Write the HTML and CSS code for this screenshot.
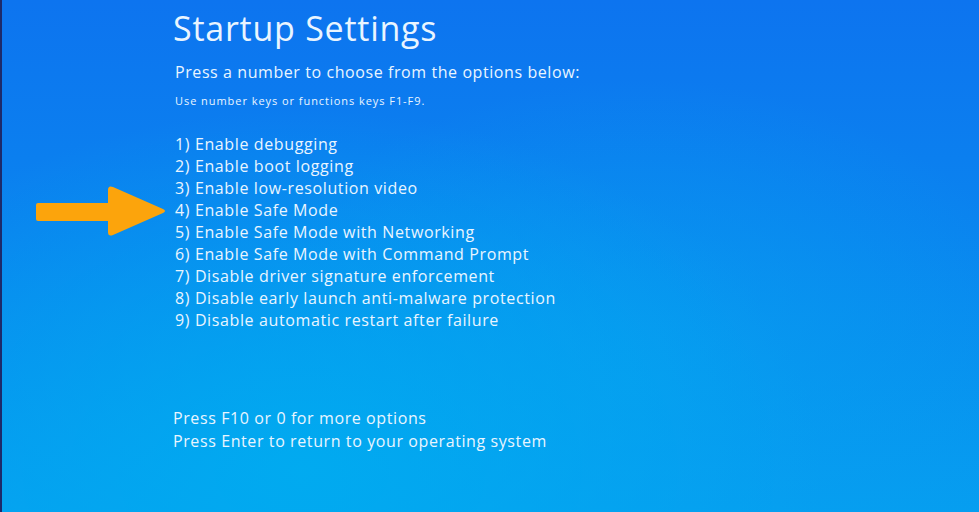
FILE: index.html
```html
<!DOCTYPE html>
<html lang="en">
<head>
    <meta charset="UTF-8">
    <meta name="viewport" content="width=device-width, initial-scale=1.0">
    <title>Startup Settings</title>
    <link rel="stylesheet" href="styles.css">
</head>
<body>

    <div class="screen">
        <!-- pointer to the safe mode option -->
        <svg class="arrow" width="140" height="60" viewBox="0 0 140 60">
            <path d="M3 20 H73 V7 Q73 2 78 4 L128 26 Q132 28 128 30 L78 52 Q73 54 73 49 V38 H3 Q1 38 1 36 V22 Q1 20 3 20 Z" fill="#fca40c"/>
        </svg>

        <div class="panel">
            <h1>Startup Settings</h1>
            <p class="lead">Press a number to choose from the options below:</p>
            <p class="hint">Use number keys or functions keys F1-F9.</p>

            <ul class="options">
                <li>1) Enable debugging</li>
                <li>2) Enable boot logging</li>
                <li>3) Enable low-resolution video</li>
                <li>4) Enable Safe Mode</li>
                <li>5) Enable Safe Mode with Networking</li>
                <li>6) Enable Safe Mode with Command Prompt</li>
                <li>7) Disable driver signature enforcement</li>
                <li>8) Disable early launch anti-malware protection</li>
                <li>9) Disable automatic restart after failure</li>
            </ul>

            <div class="footer">
                <p>Press F10 or 0 for more options</p>
                <p>Press Enter to return to your operating system</p>
            </div>
        </div>
    </div>

</body>
</html>
```

FILE: styles.css
```css
html, body {
    margin: 0;
    height: 100%;
}
body {
    font-family: 'Open Sans', 'Noto Sans', sans-serif;
    color: #e9f5ff;
    overflow: hidden;
}
.screen {
    position: relative;
    height: 512px;
    border-left: 2px solid #1d2a6a;
    background:
        radial-gradient(ellipse 520px 360px at 300px 470px, rgba(0, 172, 240, 0.9), rgba(0, 172, 240, 0) 100%),
        radial-gradient(ellipse 420px 300px at 640px 380px, rgba(6, 160, 240, 0.7), rgba(6, 160, 240, 0) 100%),
        linear-gradient(180deg, #0d74ef 0%, #0a84ef 45%, #069ef0 100%);
}
.arrow {
    position: absolute;
    left: 33px;
    top: 183px;
}
.panel {
    padding: 8px 0 0 171px;
}
h1 {
    margin: 0;
    font-size: 34px;
    font-weight: 400;
    line-height: 40px;
    letter-spacing: 0.75px;
}
.lead {
    margin: 13px 0 0 2px;
    font-size: 16px;
    line-height: 22px;
    letter-spacing: 0.58px;
}
.hint {
    margin: 11px 0 0 2px;
    font-size: 11px;
    line-height: 14px;
    letter-spacing: 0.95px;
}
.options {
    list-style: none;
    margin: 25px 0 0 2px;
    padding: 0;
    font-size: 16px;
    line-height: 22px;
    letter-spacing: 0.62px;
}
.footer {
    margin-top: 76px;
    font-size: 16px;
    line-height: 23px;
    letter-spacing: 0.6px;
}
.footer p {
    margin: 0;
}
```
